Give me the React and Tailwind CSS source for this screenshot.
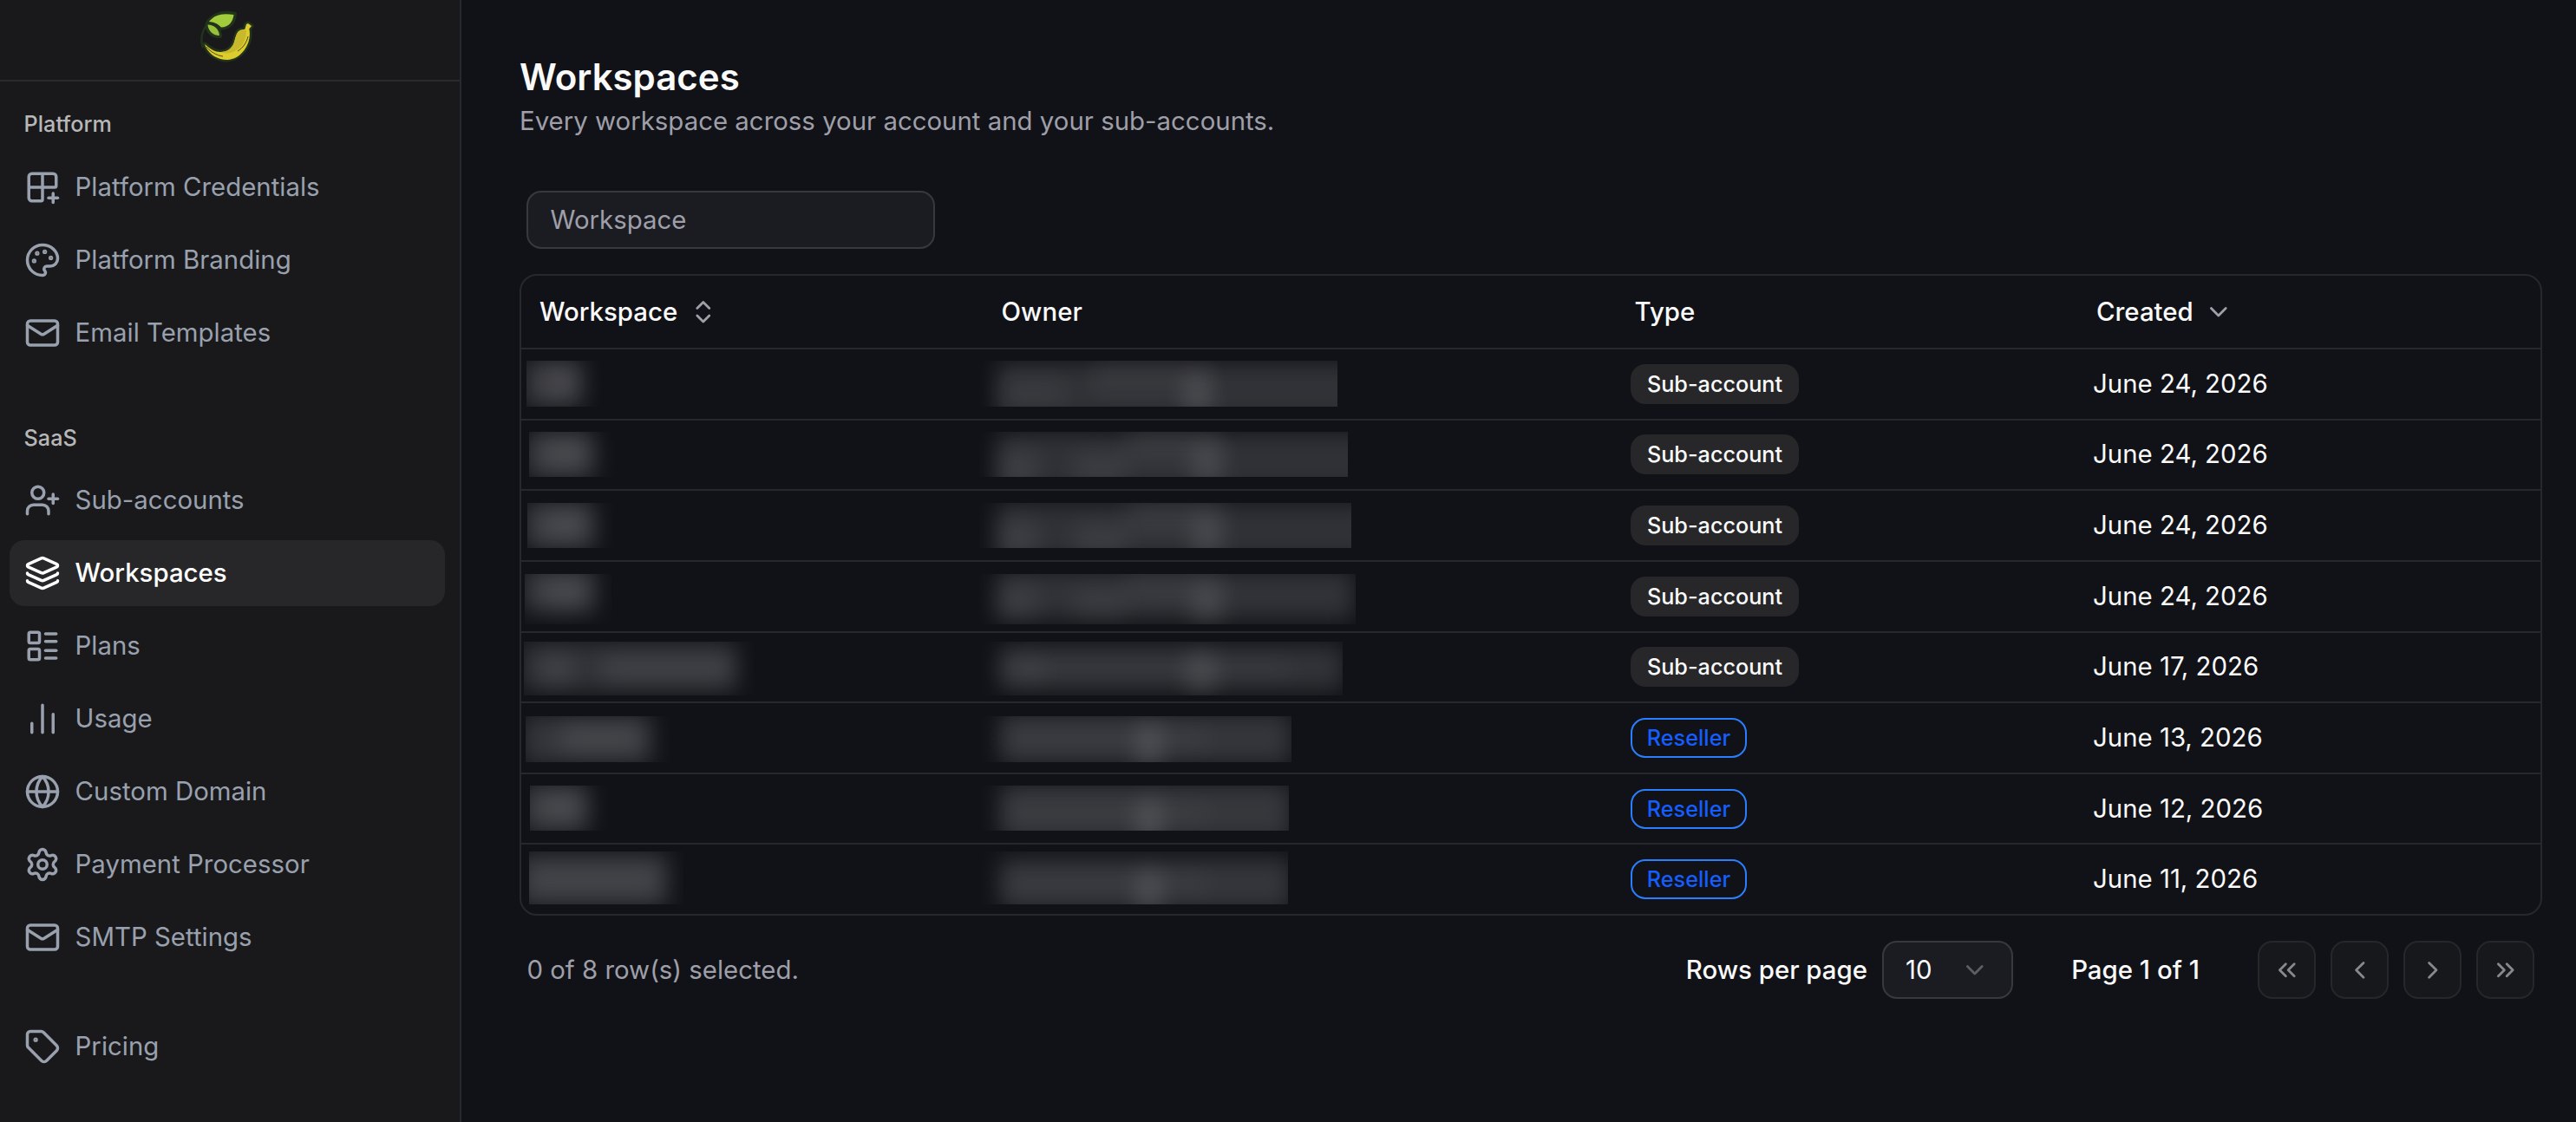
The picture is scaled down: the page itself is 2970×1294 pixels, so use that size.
import React from "react";
import {
  Grid2x2Plus, Palette, UserPlus, Layers, LayoutList, Globe, Settings, Tag,
  ChevronDown, ChevronLeft, ChevronRight, ChevronsLeft, ChevronsRight, ChevronsUpDown,
} from "lucide-react";

const iconBase = {
  viewBox: "0 0 24 24",
  fill: "none",
  stroke: "currentColor",
  strokeWidth: 2,
  strokeLinecap: "round",
  strokeLinejoin: "round",
};

const MailIcon = ({ className }) => (
  <svg {...iconBase} className={className}>
    <rect x="2" y="4" width="20" height="16" rx="2" />
    <path d="m22 7-8.970 5.700a1.940 1.940 0 0 1-2.060 0L2 7" />
  </svg>
);

const BarsIcon = ({ className }) => (
  <svg {...iconBase} className={className}>
    <path d="M5 21v-6M12 21V3M19 21V9" />
  </svg>
);

const Logo = () => (
  <svg viewBox="0 0 60 60" className="h-[60px] w-[60px] overflow-visible">
    <path d="M9 14C1 23 0 33 3 42" fill="none" stroke="#22331c" strokeWidth="2.500" />
    <g stroke="#22331c" strokeWidth="5" strokeLinejoin="round">
      <path d="M5 38C12 44 17 47 23 47c8 0 13-4 15.500-10 2-5 2.500-14 8.500-15.500l4.300-.8L53 15l2-1 4 3-2.700 3.300c1.700 8 0 17-5.600 24.400C45 52 39 55.500 31 56 20 56 9 50 5 38Z" />
      <path d="M9 12.500C17 2 27 1 39.500 3 38.500 13 33 19 23.500 19 19.500 14 14 13 9 12.500Z" />
      <path d="M8 15c8 0 14 5 14.500 13.500C14 29 8 23 8 15Z" />
    </g>
    <path d="M5 38C12 44 17 47 23 47c8 0 13-4 15.500-10 2-5 2.500-14 8.500-15.500l4.300-.8L53 15l2-1 4 3-2.700 3.300c1.700 8 0 17-5.600 24.400C45 52 39 55.500 31 56 20 56 9 50 5 38Z" fill="#dccc2c" />
    <path d="M23 47c8 0 13-4 15.500-10 2-5 2.500-14 8.500-15.500l6 .5c0 9-3 16-9 21-6 5-13 7-21 4Z" fill="#c8b82c" />
    <path d="M7 41c5 6 11 9.500 19 11M43 46c6-4 10-9 12-17" fill="none" stroke="#4b4a1c" strokeWidth="1" />
    <path d="M10 12C17 3 27 2 38.500 4 37.500 12 33 18.500 24 18.500 20 14 15 12.500 10 12Z" fill="#a3cc3d" />
    <path d="M8.500 15.500c7.500 0 13 5 13.500 12.500C14 28 9 22 8.500 15.500Z" fill="#98c03b" />
  </svg>
);

const platform = [
  { label: "Platform Credentials", Icon: Grid2x2Plus },
  { label: "Platform Branding", Icon: Palette },
  { label: "Email Templates", Icon: MailIcon },
];

const saas = [
  { label: "Sub-accounts", Icon: UserPlus },
  { label: "Workspaces", Icon: Layers, active: true },
  { label: "Plans", Icon: LayoutList },
  { label: "Usage", Icon: BarsIcon },
  { label: "Custom Domain", Icon: Globe },
  { label: "Payment Processor", Icon: Settings },
  { label: "SMTP Settings", Icon: MailIcon },
];

function NavItem({ label, Icon, active }) {
  return (
    <a
      className={
        "flex h-[76px] items-center gap-[16.6px] rounded-[17px] px-[17px] text-[29.4px] " +
        (active ? "bg-[#272729] font-medium text-white" : "text-[#99a1af]")
      }
    >
      <Icon className="size-[42px] shrink-0" />
      <span>{label}</span>
    </a>
  );
}

// Redacted values: a and b give the clip boxes inside a row,
// ab and bb the soft bars [x, width, top, height, opacity] drawn in them.
const rows = [
  { date: "June 24, 2026", sub: true, a: [6, 90, 13, 53], ab: [[-4, 70, -2, 56, 0.18], [20, 36, 8, 34, 0.09]], b: [413, 13, 53], bb: [[20, 425, 2, 66, 0.15], [20, 80, 18, 40, 0.04], [130, 140, -10, 50, 0.04], [236, 32, 18, 50, 0.12]] },
  { date: "June 24, 2026", sub: true, a: [9, 100, 13, 52], ab: [[-4, 80, -2, 56, 0.18], [16, 50, 8, 34, 0.09]], b: [425, 13, 52], bb: [[20, 450, 0, 68, 0.14], [170, 110, -14, 50, 0.05], [20, 46, 22, 50, 0.07], [110, 60, 24, 44, 0.06], [246, 34, 16, 54, 0.1]] },
  { date: "June 24, 2026", sub: true, a: [7, 100, 14, 52], ab: [[-4, 82, -2, 56, 0.18], [18, 50, 8, 34, 0.09]], b: [429, 14, 52], bb: [[20, 450, 0, 66, 0.14], [170, 110, -14, 50, 0.05], [20, 46, 20, 50, 0.07], [110, 60, 24, 44, 0.06], [246, 34, 16, 54, 0.1]] },
  { date: "June 24, 2026", sub: true, a: [4, 100, 14, 58], ab: [[-2, 84, -8, 52, 0.18], [22, 48, 6, 32, 0.09]], b: [434, 14, 58], bb: [[20, 412, -4, 56, 0.15], [170, 110, -14, 50, 0.04], [20, 46, 14, 40, 0.06], [110, 60, 18, 36, 0.05], [246, 34, 14, 46, 0.1]] },
  { date: "June 17, 2026", sub: true, a: [3, 265, 10, 62], ab: [[-4, 250, 0, 58, 0.15], [20, 36, 16, 30, 0.09], [90, 150, 18, 26, 0.09]], b: [419, 10, 62], bb: [[24, 396, 4, 52, 0.15], [24, 50, 20, 24, 0.07], [60, 300, 22, 18, 0.04], [240, 32, 12, 50, 0.11]] },
  { date: "June 13, 2026", sub: false, a: [5, 166, 15, 53], ab: [[-4, 150, -2, 58, 0.16], [40, 94, 8, 34, 0.09]], b: [360, 15, 53], bb: [[24, 336, -4, 60, 0.16], [24, 240, 14, 24, 0.04], [182, 28, 8, 58, 0.12]] },
  { date: "June 12, 2026", sub: false, a: [10, 91, 13, 52], ab: [[-10, 78, -2, 56, 0.18], [10, 50, 8, 34, 0.09]], b: [357, 13, 52], bb: [[24, 336, -2, 66, 0.17], [24, 240, 20, 24, 0.03], [182, 28, 16, 56, 0.12]] },
  { date: "June 11, 2026", sub: false, a: [9, 178, 8, 61], ab: [[-12, 172, 2, 62, 0.18], [0, 150, 20, 26, 0.07]], b: [356, 8, 61], bb: [[24, 336, 8, 60, 0.16], [24, 240, 26, 20, 0.04], [182, 28, 22, 56, 0.12]] },
];

function Redacted({ left, width, top, height, bars }) {
  return (
    <div className="relative shrink-0 overflow-hidden" style={{ marginLeft: left, marginTop: top, width, height }}>
      {bars.map(([x, w, y, h, o], i) => (
        <div
          key={i}
          className="absolute bg-[#ebecee] blur-[13px]"
          style={{ left: x, width: w, top: y, height: h, opacity: o }}
        />
      ))}
    </div>
  );
}

const cols = "grid grid-cols-[532px_730px_532px_1fr]";

const PageButton = ({ Icon }) => (
  <button className="flex size-[67px] items-center justify-center rounded-[17px] border-2 border-[#26272b] bg-[#17181c] text-[#88898b]">
    <Icon className="size-[33.6px]" />
  </button>
);

export default function App() {
  return (
    <div className="flex h-[1294px] w-[2970px] overflow-hidden bg-[#111217] font-['Inter',sans-serif] text-[29.4px] leading-[42px] text-[#fafafa]">
      <aside className="flex w-[532px] shrink-0 flex-col border-r-2 border-[#272830] bg-[#19191b]">
        <div className="flex h-[94px] shrink-0 justify-center border-b-2 border-[#2b2b2d] pt-[13px] pr-[9px]">
          <Logo />
        </div>
        <nav className="flex flex-col pr-[17px] pl-[11px]">
          <div className="mt-[32px] flex h-[34px] items-center pl-[16.6px] text-[25.2px] font-medium text-[#b7b7b8]">Platform</div>
          <div className="mt-[18px] flex flex-col gap-2">
            {platform.map((item) => <NavItem key={item.label} {...item} />)}
          </div>
          <div className="mt-[66px] flex h-[34px] items-center pl-[16.6px] text-[25.2px] font-medium text-[#b7b7b8]">SaaS</div>
          <div className="mt-[17px] flex flex-col gap-2">
            {saas.map((item) => <NavItem key={item.label} {...item} />)}
          </div>
          <div className="mt-[50px]">
            <NavItem label="Pricing" Icon={Tag} />
          </div>
        </nav>
      </aside>

      <main className="flex grow flex-col pr-[39px] pl-[67px]">
        <h1 className="mt-[64px] text-[42px] leading-[50px] font-semibold">Workspaces</h1>
        <p className="mt-[5px] text-[#9f9fa9]">Every workspace across your account and your sub-accounts.</p>

        <div className="mt-[59px] ml-[8px] flex h-[67px] w-[471px] items-center rounded-[17px] border-2 border-[#38393d] bg-[#1b1c21] px-[25.5px] text-[#9f9fa9]">
          Workspace
        </div>

        <div className="mt-[29px] overflow-hidden rounded-[20px] border-2 border-[#27282c]">
          <div className={cols + " h-[83px] items-center font-medium"}>
            <div className="flex items-center gap-[12.6px] pl-[21px]">
              Workspace
              <ChevronsUpDown className="size-[33.6px] text-[#9f9fa9]" />
            </div>
            <div className="pl-[21.6px]">Owner</div>
            <div className="pl-[21.6px]">Type</div>
            <div className="flex items-center gap-[12px] pl-[22px]">
              Created
              <ChevronDown className="size-[33.6px] text-[#9f9fa9]" />
            </div>
          </div>
          {rows.map((r, i) => (
            <div key={i} className={cols + " h-[81.625px] border-t-2 border-[#27282c]"}>
              <Redacted left={r.a[0]} width={r.a[1]} top={r.a[2]} height={r.a[3]} bars={r.ab} />
              <Redacted left={-4} width={r.b[0]} top={r.b[1]} height={r.b[2]} bars={r.bb} />
              <div className="flex items-center pl-[17px]">
                {r.sub ? (
                  <span className="flex h-[46px] w-[194px] items-center justify-center rounded-[17px] bg-[#27272a] text-[25.2px] font-medium">Sub-account</span>
                ) : (
                  <span className="flex h-[46px] w-[134px] items-center justify-center rounded-[17px] border-2 border-[#2b7fff] text-[25.2px] font-medium text-[#155dfc]">Reseller</span>
                )}
              </div>
              <div className="flex items-center pl-[18px]">{r.date}</div>
            </div>
          ))}
        </div>

        <div className="mt-[29px] flex items-center pr-[9px] pl-[8.4px]">
          <div className="grow text-[#9f9fa9]">0 of 8 row(s) selected.</div>
          <div className="flex items-center gap-[17px] font-medium">
            Rows per page
            <div className="flex h-[67px] w-[151px] items-center justify-between rounded-[17px] border-2 border-[#38393d] bg-[#1b1c21] pr-[25px] pl-[25px] font-normal">
              10
              <ChevronDown className="size-[33.6px] text-[#5d5e64]" />
            </div>
          </div>
          <div className="flex w-[282px] items-center justify-center font-medium">Page 1 of 1</div>
          <div className="flex gap-[17px]">
            <PageButton Icon={ChevronsLeft} />
            <PageButton Icon={ChevronLeft} />
            <PageButton Icon={ChevronRight} />
            <PageButton Icon={ChevronsRight} />
          </div>
        </div>
      </main>
    </div>
  );
}
